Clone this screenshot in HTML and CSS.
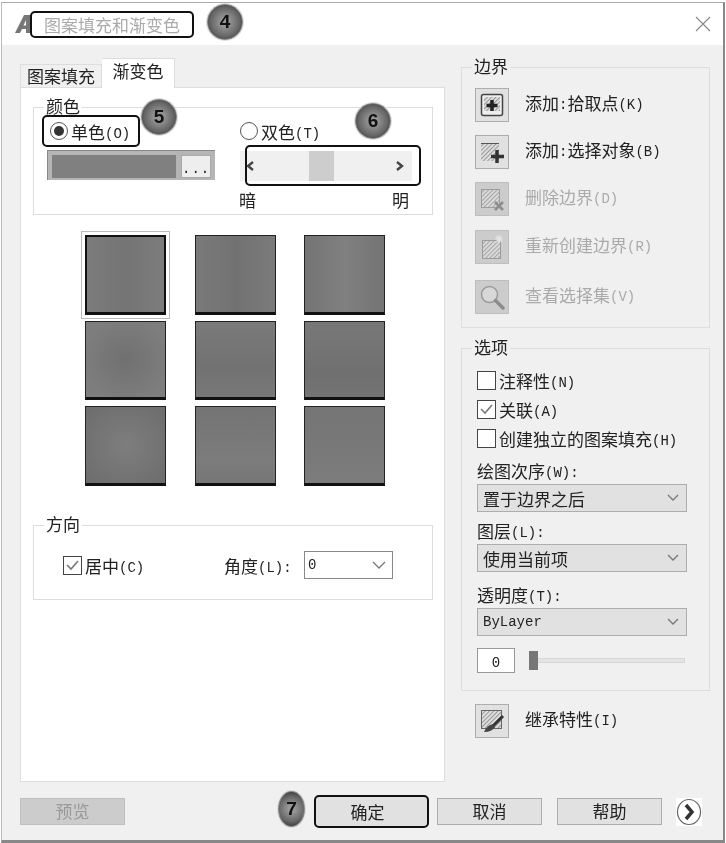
FILE: index.html
```html
<!DOCTYPE html>
<html>
  <head>
    <title>图案填充和渐变色</title>
    <link rel="stylesheet" href="styles.css">
  </head>
  <body>
    <div class="dialog">
      <svg width="0" height="0" class="defs">
        <defs>
          <pattern id="hatch" width="3" height="3" patternUnits="userSpaceOnUse" patternTransform="rotate(45)">
            <rect width="3" height="3" fill="#e6e6e6"/>
            <rect width="1.2" height="3" fill="#999"/>
          </pattern>
        </defs>
      </svg>

      <div class="titlebar">
        <svg class="app-icon" width="20" height="20" viewBox="0 0 20 20"><path d="M1 19 L10 1 H17 V19 H12 V15 H8 L6 19 Z M9.500 11.500 H12 V6 Z" fill="#777"/></svg>
        <span class="title">图案填充和渐变色</span>
        <svg class="close" width="16" height="16" viewBox="0 0 16 16"><path d="M1 1 L15 15 M15 1 L1 15" stroke="#8a8a8a" stroke-width="1.200" fill="none"/></svg>
      </div>

      <div class="main">
        <div class="left">
          <div class="tabs">
            <div class="tab">图案填充</div>
            <div class="tab active">渐变色</div>
          </div>
          <div class="panel">
            <fieldset class="group">
              <legend>颜色</legend>
              <div class="color-cols">
                <div class="color-one">
                  <div class="radio-row"><span class="radio checked"></span><span>单色<span class="key">(O)</span></span></div>
                  <div class="swatch">
                    <div class="swatch-fill"></div>
                    <div class="swatch-btn">...</div>
                  </div>
                </div>
                <div class="color-two">
                  <div class="radio-row"><span class="radio"></span><span>双色<span class="key">(T)</span></span></div>
                  <div class="shade">
                    <svg width="10" height="12" viewBox="0 0 10 12"><path d="M8 2 L3 6 L8 10" stroke="#444" stroke-width="2.400" fill="none"/></svg>
                    <div class="shade-thumb"></div>
                    <svg width="10" height="12" viewBox="0 0 10 12"><path d="M2 2 L7 6 L2 10" stroke="#444" stroke-width="2.400" fill="none"/></svg>
                  </div>
                  <div class="shade-labels"><span>暗</span><span>明</span></div>
                </div>
              </div>
            </fieldset>

            <div class="tiles">
              <div class="tile selected t1"></div>
              <div class="tile t2"></div>
              <div class="tile t3"></div>
              <div class="tile t4"></div>
              <div class="tile t5"></div>
              <div class="tile t6"></div>
              <div class="tile t7"></div>
              <div class="tile t8"></div>
              <div class="tile t9"></div>
            </div>

            <fieldset class="group direction-group">
              <legend>方向</legend>
              <div class="direction-row">
                <div class="check-row center-check">
                  <span class="check"><svg width="17" height="17" viewBox="0 0 17 17"><path d="M3 8 L7 12 L14 4" stroke="#777" stroke-width="1.600" fill="none"/></svg></span><span>居中<span class="key">(C)</span></span>
                </div>
                <div class="angle-label">角度<span class="key">(L):</span></div>
                <div class="angle-select">
                  <span class="key">0</span>
                  <svg width="14" height="8" viewBox="0 0 14 8"><path d="M1 1 L7 7 L13 1" stroke="#777" stroke-width="1.300" fill="none"/></svg>
                </div>
              </div>
            </fieldset>
          </div>
        </div>

        <div class="right">
          <fieldset class="group">
            <legend>边界</legend>
            <div class="tool-list">
              <div class="tool-row">
                <div class="tool-btn">
                  <svg width="26" height="26" viewBox="0 0 26 26">
                    <rect x="2.500" y="2.500" width="21" height="21" rx="2" fill="#eee" stroke="#444" stroke-width="1.500"/>
                    <rect x="5" y="5" width="16" height="14" fill="url(#hatch)"/>
                    <path d="M13 8 V19 M7.500 13.500 H18.500" stroke="#222" stroke-width="3.500"/>
                  </svg>
                </div>
                <span class="tool-label">添加<span class="key">:</span>拾取点<span class="key">(K)</span></span>
              </div>
              <div class="tool-row">
                <div class="tool-btn">
                  <svg width="26" height="26" viewBox="0 0 26 26">
                    <rect x="2" y="4" width="18" height="18" fill="url(#hatch)"/>
                    <path d="M2 4.500 H20" stroke="#555"/>
                    <path d="M18 11 V24 M12 17.500 H25" stroke="#333" stroke-width="3.500"/>
                  </svg>
                </div>
                <span class="tool-label">添加<span class="key">:</span>选择对象<span class="key">(B)</span></span>
              </div>
              <div class="tool-row disabled">
                <div class="tool-btn">
                  <svg width="26" height="26" viewBox="0 0 26 26">
                    <rect x="2.500" y="3.500" width="18" height="18" fill="url(#hatch)" stroke="#8d8d8d"/>
                    <path d="M16 16 L24 24 M24 16 L16 24" stroke="#777" stroke-width="2.500"/>
                  </svg>
                </div>
                <span class="tool-label">删除边界<span class="key">(D)</span></span>
              </div>
              <div class="tool-row disabled recreate">
                <div class="tool-btn">
                  <svg width="26" height="26" viewBox="0 0 26 26">
                    <rect x="3.500" y="6.500" width="18" height="18" fill="url(#hatch)" stroke="#8d8d8d"/>
                    <path d="M20 1 V9 M16 5 H24 M17 2 L23 8 M23 2 L17 8" stroke="#eee" stroke-width="1.200"/>
                  </svg>
                </div>
                <span class="tool-label">重新创建边界<span class="key">(R)</span></span>
              </div>
              <div class="tool-row disabled view">
                <div class="tool-btn">
                  <svg width="26" height="26" viewBox="0 0 26 26">
                    <circle cx="10.500" cy="10.500" r="8" fill="#ddd" stroke="#8a8a8a" stroke-width="1.500"/>
                    <path d="M16.500 16.500 L24 24" stroke="#777" stroke-width="3.500" stroke-linecap="round"/>
                  </svg>
                </div>
                <span class="tool-label">查看选择集<span class="key">(V)</span></span>
              </div>
            </div>
          </fieldset>

          <fieldset class="group options">
            <legend>选项</legend>
            <div class="options-body">
              <div class="check-row"><span class="check"></span><span>注释性<span class="key">(N)</span></span></div>
              <div class="check-row gap-row">
                <span class="check"><svg width="17" height="17" viewBox="0 0 17 17"><path d="M3 8 L7 12 L14 4" stroke="#777" stroke-width="1.600" fill="none"/></svg></span><span>关联<span class="key">(A)</span></span>
              </div>
              <div class="check-row gap-row"><span class="check"></span><span>创建独立的图案填充<span class="key">(H)</span></span></div>

              <div class="field-label first">绘图次序<span class="key">(W):</span></div>
              <div class="select">
                <span>置于边界之后</span>
                <svg width="14" height="8" viewBox="0 0 14 8"><path d="M2 1 L7 6 L12 1" stroke="#777" stroke-width="1.300" fill="none"/></svg>
              </div>
              <div class="field-label">图层<span class="key">(L):</span></div>
              <div class="select">
                <span>使用当前项</span>
                <svg width="14" height="8" viewBox="0 0 14 8"><path d="M2 1 L7 6 L12 1" stroke="#777" stroke-width="1.300" fill="none"/></svg>
              </div>
              <div class="field-label third">透明度<span class="key">(T):</span></div>
              <div class="select">
                <span class="key">ByLayer</span>
                <svg width="14" height="8" viewBox="0 0 14 8"><path d="M2 1 L7 6 L12 1" stroke="#777" stroke-width="1.300" fill="none"/></svg>
              </div>
              <div class="opacity-row">
                <div class="opacity-input"><span class="key">0</span></div>
                <div class="opacity-track"><div class="opacity-thumb"></div></div>
              </div>
            </div>
          </fieldset>

          <div class="tool-row inherit">
            <div class="tool-btn">
              <svg width="26" height="26" viewBox="0 0 26 26">
                <rect x="2.500" y="2.500" width="20" height="18" fill="url(#hatch)" stroke="#666"/>
                <path d="M24 8 L14 18" stroke="#333" stroke-width="3"/>
                <path d="M14 16 Q8 17 5 24 Q13 24 16 19 Z" fill="#444"/>
              </svg>
            </div>
            <span class="tool-label">继承特性<span class="key">(I)</span></span>
          </div>
        </div>
      </div>

      <div class="footer">
        <div class="btn preview">预览</div>
        <div class="btn ok">确定</div>
        <div class="btn cancel">取消</div>
        <div class="btn help">帮助</div>
        <div class="more">
          <svg width="26" height="28" viewBox="0 0 26 28">
            <ellipse cx="13" cy="14" rx="11.500" ry="12.500" fill="#fff" stroke="#666" stroke-width="1.200"/>
            <path d="M10 7 L16 14 L10 21" stroke="#333" stroke-width="3.500" fill="none"/>
          </svg>
        </div>
      </div>

      <div class="callout call-title"></div>
      <div class="callout call-radio"></div>
      <div class="callout call-shade"></div>
      <div class="badge b4">4</div>
      <div class="badge b5">5</div>
      <div class="badge b6">6</div>
      <div class="badge b7">7</div>
    </div>
  </body>
</html>
```

FILE: styles.css
```css
* {
  box-sizing: border-box;
}
body {
  margin: 0;
  background-color: white;
  font-family: "Noto Sans CJK SC", "Liberation Mono", sans-serif;
  font-size: 17px;
  color: #222;
}
.defs {
  position: absolute;
}
.key {
  font-family: "Liberation Mono", monospace;
  font-size: 14px;
  vertical-align: 1px;
}
.dialog {
  position: relative;
  width: 724px;
  height: 841px;
  margin: 2px 0 0 1px;
  background-color: #f0f0f0;
  border-top: 1px solid #aaa;
  border-left: 1px solid #bbb;
  border-right: 2px solid #888;
  border-bottom: 3px solid #888;
  filter: blur(0.35px);
}

/* title bar */
.titlebar {
  display: flex;
  align-items: center;
  height: 42px;
  padding: 0 12px;
  background-color: white;
}
.app-icon {
  margin-right: 10px;
}
.title {
  flex: 1;
  color: #aaa;
}

/* columns */
.main {
  display: flex;
  height: 737px;
  padding-left: 18px;
}
.left {
  display: flex;
  flex-direction: column;
  width: 425px;
  padding-top: 13px;
}
.right {
  width: 249px;
  margin-left: 16px;
  padding-top: 12px;
}
.tabs {
  display: flex;
  align-items: flex-end;
  height: 29px;
}
.tab {
  height: 23px;
  width: 82px;
  line-height: 22px;
  text-align: center;
  background-color: #f0f0f0;
  border: 1px solid #ddd;
  border-bottom: none;
}
.tab.active {
  position: relative;
  height: 30px;
  width: 73px;
  margin-bottom: -1px;
  line-height: 24px;
  background-color: white;
  border-left: none;
}
.panel {
  flex: 1;
  padding: 9px 11px 0 12px;
  background-color: white;
  border: 1px solid #ddd;
}

/* group boxes */
.group {
  margin: 0;
  padding: 0;
  border: 1px solid #ddd;
}
.group legend {
  height: 20px;
  margin-left: 10px;
  padding: 0 2px;
  line-height: 18px;
}

/* colour box */
.color-cols {
  display: flex;
  padding: 4px 20px 4px 13px;
}
.color-one {
  width: 193px;
}
.color-two {
  flex: 1;
}
.radio-row {
  display: flex;
  align-items: center;
  height: 20px;
  padding-left: 3px;
}
.color-two .radio-row {
  padding-left: 0;
}
.radio {
  width: 18px;
  height: 18px;
  margin-right: 3px;
  border: 1px solid #555;
  border-radius: 50%;
  background-color: white;
}
.radio.checked {
  padding: 3px;
  background-clip: content-box;
  background-color: #333;
}
.swatch {
  display: flex;
  gap: 5px;
  width: 168px;
  height: 30px;
  margin-top: 9px;
  padding: 4px 4px 2px 4px;
  background-color: #b5b5b5;
  border-top: 1px solid #888;
  border-left: 1px solid #888;
}
.swatch-fill {
  width: 124px;
  background-color: #808080;
}
.swatch-btn {
  width: 30px;
  background-color: #eee;
  border: 1px solid #aaa;
  font-family: "Liberation Mono", monospace;
  font-size: 14px;
  line-height: 26px;
  text-align: center;
  letter-spacing: 1px;
}
.shade {
  display: flex;
  align-items: center;
  justify-content: space-between;
  height: 30px;
  margin-top: 10px;
  padding: 0 7px 0 5px;
  background-color: #f0f0f0;
}
.shade-thumb {
  width: 25px;
  height: 30px;
  margin-right: 7px;
  background-color: #cdcdcd;
}
.shade-labels {
  display: flex;
  justify-content: space-between;
  height: 20px;
  margin-top: 9px;
  margin-left: -1px;
  padding-right: 3px;
  line-height: 20px;
}

/* gradient tiles */
.tiles {
  display: grid;
  grid-template-columns: 110px 109px 81px;
  grid-template-rows: 80px 79px 80px;
  row-gap: 6px;
  margin: 20px 0 0 52px;
}
.tile {
  width: 81px;
  border: 1px solid #222;
  border-bottom: 3px solid #111;
  background-color: #777;
}
.tile.selected {
  outline: 1px solid #bbb;
  outline-offset: 3px;
  border: 2px solid #111;
  border-bottom-width: 3px;
}
.t1 { background: linear-gradient(90deg, #7c7c7c, #747474 50%, #7c7c7c); }
.t2 { background: linear-gradient(90deg, #7a7a7a, #727272 50%, #7a7a7a); }
.t3 { background: linear-gradient(90deg, #747474, #808080 50%, #747474); }
.t4 { background: radial-gradient(circle, #707070, #7e7e7e 80%); }
.t5 { background: linear-gradient(180deg, #7a7a7a, #727272 60%, #787878); }
.t6 { background: linear-gradient(180deg, #787878, #707070 70%, #747474); }
.t7 { background: radial-gradient(circle, #7e7e7e, #6e6e6e 90%); }
.t8 { background: linear-gradient(180deg, #747474, #7c7c7c 70%, #777); }
.t9 { background: linear-gradient(180deg, #757575, #7c7c7c); }

/* direction box */
.direction-group {
  margin-top: 29px;
}
.direction-row {
  display: flex;
  align-items: center;
  padding: 16px 0 20px 29px;
}
.check-row {
  display: flex;
  align-items: center;
  height: 19px;
}
.check {
  display: flex;
  width: 19px;
  height: 19px;
  margin-right: 3px;
  background-color: white;
  border: 1px solid #444;
}
.center-check {
  width: 161px;
}
.angle-label {
  width: 80px;
}
.angle-select {
  display: flex;
  align-items: center;
  justify-content: space-between;
  width: 89px;
  height: 28px;
  padding: 0 6px 0 3px;
  background-color: white;
  border: 1px solid #888;
}

/* right column */
.tool-list {
  display: flex;
  flex-direction: column;
  gap: 13px;
  padding: 11px 13px 13px 13px;
}
.tool-row {
  display: flex;
  align-items: center;
  gap: 16px;
  height: 34px;
}
.tool-label {
  padding-bottom: 5px;
}
.tool-row.recreate {
  margin-top: 1px;
}
.tool-row.view {
  margin-top: 3px;
}
.tool-row.disabled {
  color: #aaa;
}
.tool-btn {
  display: flex;
  align-items: center;
  justify-content: center;
  width: 34px;
  height: 34px;
  background-color: #e1e1e1;
  border: 1px solid #adadad;
}
.disabled .tool-btn {
  background-color: #ccc;
  border-color: #bfbfbf;
}
.disabled .tool-btn svg {
  opacity: 0.75;
}
.options {
  margin-top: 10px;
}
.options-body {
  padding: 13px 22px 17px 15px;
}
.gap-row {
  margin-top: 10px;
}
.field-label {
  height: 20px;
  margin-top: 9px;
  line-height: 20px;
}
.field-label.first {
  margin-top: 13px;
}
.field-label.third {
  margin-top: 13px;
}
.select {
  display: flex;
  align-items: center;
  justify-content: space-between;
  height: 28px;
  margin-top: 3px;
  padding: 0 6px 0 5px;
  background-color: #e1e1e1;
  border: 1px solid #adadad;
}
.opacity-row {
  display: flex;
  align-items: center;
  gap: 14px;
  margin-top: 12px;
}
.opacity-input {
  width: 38px;
  height: 25px;
  line-height: 23px;
  text-align: center;
  background-color: white;
  border: 1px solid #999;
}
.opacity-track {
  position: relative;
  flex: 1;
  height: 5px;
  margin-right: 2px;
  background-color: #e4e4e4;
  border: 1px solid #d8d8d8;
}
.opacity-thumb {
  position: absolute;
  left: -1px;
  top: -8px;
  width: 9px;
  height: 19px;
  background-color: #777;
}
.inherit {
  margin-top: 13px;
  padding-left: 14px;
}

/* buttons */
.footer {
  display: flex;
  align-items: center;
  height: 27px;
  margin-top: 16px;
  padding-left: 18px;
}
.btn {
  height: 27px;
  width: 105px;
  line-height: 24px;
  text-align: center;
  background-color: #e1e1e1;
  border: 1px solid #adadad;
}
.preview {
  color: #999;
  background-color: #ccc;
  border-color: #bfbfbf;
}
.ok {
  width: 115px;
  height: 33px;
  margin-left: 189px;
  padding-right: 8px;
  line-height: 29px;
  border: 2px solid #111;
  border-radius: 5px;
}
.cancel {
  margin-left: 8px;
}
.help {
  margin-left: 15px;
}
.more {
  display: flex;
  margin-left: 14px;
  background-color: white;
}

/* annotations drawn over the dialog */
.callout {
  position: absolute;
  border: 2px solid #111;
  border-radius: 5px;
}
.call-title {
  left: 28px;
  top: 8px;
  width: 164px;
  height: 27px;
}
.call-radio {
  left: 40px;
  top: 112px;
  width: 98px;
  height: 32px;
}
.call-shade {
  left: 243px;
  top: 142px;
  width: 176px;
  height: 41px;
}
.badge {
  position: absolute;
  width: 36px;
  height: 36px;
  font-family: "Liberation Sans", sans-serif;
  font-size: 19px;
  font-weight: bold;
  line-height: 34px;
  text-align: center;
  color: #111;
  background: radial-gradient(circle, #999 15%, #666 60%, #2a2a2a 95%);
  border: 1px solid #888;
  border-radius: 50%;
  box-shadow: 0 0 0 1px #ddd;
}
.b4 { left: 205px; top: 1px; }
.b5 { left: 139px; top: 96px; }
.b6 { left: 353px; top: 100px; }
.b7 {
  left: 276px;
  top: 788px;
  width: 27px;
  height: 36px;
}
```
